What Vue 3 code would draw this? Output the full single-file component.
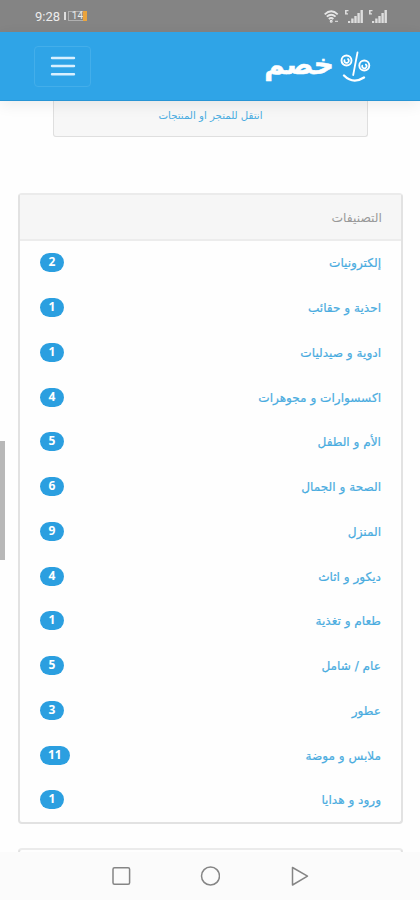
<script setup>
import { ref } from "vue";

const categories = ref([
  { name: "إلكترونيات", count: 2 },
  { name: "احذية و حقائب", count: 1 },
  { name: "ادوية و صيدليات", count: 1 },
  { name: "اكسسوارات و مجوهرات", count: 4 },
  { name: "الأم و الطفل", count: 5 },
  { name: "الصحة و الجمال", count: 6 },
  { name: "المنزل", count: 9 },
  { name: "ديكور و اثاث", count: 4 },
  { name: "طعام و تغذية", count: 1 },
  { name: "عام / شامل", count: 5 },
  { name: "عطور", count: 3 },
  { name: "ملابس و موضة", count: 11 },
  { name: "ورود و هدايا", count: 1 },
]);
</script>

<template>
  <div class="screen" dir="rtl">
    <div class="status" dir="ltr">
      <span class="time">9:28</span>
      <span class="battery"><span class="level">14</span><i></i></span>
      <div class="signals">
        <svg width="15" height="13" viewBox="0 0 15 13" fill="none" stroke="#e6e6e6" stroke-width="1.8">
          <path d="M.7 4.3Q7.2-1.7 13.7 4.3M2.8 6.7Q7.2 2.7 11.6 6.7M4.8 9Q7.2 7 9.4 9" />
          <circle cx="7.2" cy="11.3" r=".6" />
          <path d="M11 11.3h3" stroke-width="1" />
        </svg>
        <svg v-for="n in 2" :key="n" width="18" height="13" viewBox="0 0 18 13" fill="#dedede">
          <path d="M0 0h3.5v1.2H1.6v2H3v1.3H0zM3 11h2.2v2H3zM6.200 8.500h2.400V13H6.200zM9.300 6h2.400v7H9.300zM12.400 3h2.400v10h-2.400zM15.500 0h2.400v13h-2.400z" />
        </svg>
      </div>
    </div>

    <header class="navbar">
      <a class="brand">
        <svg width="32" height="33" viewBox="0 0 32 33" fill="none" stroke="#fff" stroke-linecap="round">
          <circle cx="7.500" cy="10.500" r="5" stroke-width="1.900" />
          <circle cx="25.300" cy="15.500" r="5" stroke-width="1.900" />
          <path d="M18.500 2.500 14.200 25" stroke-width="1.800" />
          <path d="M5 25.500Q14 34.500 25 27.500" stroke-width="2.300" />
          <path d="M5.500 10a2.200 2.200 0 1 0 3.500-1M23.300 15.500a2.200 2.200 0 1 0 3.500-1" stroke-width="1.700" />
        </svg>
        <span>خصم</span>
      </a>
      <button class="toggler">
        <svg width="26" height="22" viewBox="0 0 26 22" stroke="#d9f0ff" stroke-width="2.400" stroke-linecap="round">
          <path d="M2 3h22M2 11h22M2 19.300h22" />
        </svg>
      </button>
    </header>

    <main>
      <div class="store">
        <a>انتقل للمتجر او المنتجات</a>
      </div>

      <div class="card">
        <div class="card-header">التصنيفات</div>
        <ul>
          <li v-for="item in categories" :key="item.name">
            <a>{{ item.name }}</a>
            <span class="badge">{{ item.count }}</span>
          </li>
        </ul>
      </div>
      <div class="card next"></div>
      <div class="scrollbar"></div>
    </main>

    <footer class="keys" dir="ltr">
      <svg width="20" height="20" viewBox="0 0 20 20"><rect x="2" y="1.700" width="16.600" height="16.600" rx="1.500" /></svg>
      <svg width="20" height="20" viewBox="0 0 20 20"><circle cx="10.500" cy="10" r="9" /></svg>
      <svg width="20" height="20" viewBox="0 0 20 20"><path d="M3.500 1.500v17.500L18.500 10.200z" /></svg>
    </footer>
  </div>
</template>

<style>
body {
  margin: 0;
  background: #fefefe;
}
</style>

<style scoped>
* {
  box-sizing: border-box;
}
.screen {
  width: 420px;
  height: 900px;
  display: flex;
  flex-direction: column;
  overflow: hidden;
  font-family: "DejaVu Sans", sans-serif;
  background: #fefefe;
}
.status {
  flex: 0 0 32px;
  display: flex;
  align-items: center;
  padding: 0 33px 0 35px;
  background: #848484;
  color: #ececec;
  font-family: Roboto, sans-serif;
  font-size: 13px;
}
.battery {
  display: flex;
  align-items: center;
  justify-content: flex-end;
  width: 23px;
  height: 8px;
  margin-left: 4px;
  border-left: 2px solid #ddd;
}
.level {
  border: 1px solid #b0b0b0;
  border-right: 0;
  padding-left: 3px;
  font-size: 10px;
  line-height: 8px;
}
.battery i {
  width: 4px;
  height: 10px;
  background: #eba43c;
}
.signals {
  display: flex;
  gap: 6px;
  margin-left: auto;
}
.navbar {
  position: relative;
  z-index: 1;
  flex: 0 0 69px;
  display: flex;
  align-items: center;
  justify-content: space-between;
  padding: 0 49px 0 34px;
  background: #2fa4e7;
  border-bottom: 1px solid #2895d5;
  box-shadow: 0 4px 14px rgba(0, 0, 0, 0.07);
}
.brand {
  display: flex;
  align-items: center;
  gap: 5px;
  font-size: 28px;
  font-weight: bold;
  line-height: 40px;
}
.toggler {
  display: flex;
  align-items: center;
  justify-content: center;
  width: 57px;
  height: 41px;
  padding: 0;
  border: 1px solid #43aeea;
  border-radius: 4px;
  background: none;
}
main {
  position: relative;
  flex: 1;
  overflow: hidden;
}
.store {
  height: 36px;
  margin: 0 52px 0 53px;
  text-align: center;
  background: #f7f7f7;
  border: 1px solid #dfdfdf;
  border-top: 0;
  border-radius: 0 0 3px 3px;
  font-size: 10.200px;
  line-height: 30px;
}
a {
  color: #4aace0;
}
.brand,
.brand span {
  color: #fff;
}
.brand span {
  padding-bottom: 2px;
  -webkit-text-stroke: 0.5px #fff;
}
.card {
  height: 631px;
  margin: 56px 17px 0 18px;
  border: 2px solid #e2e2e2;
  border-top-color: #ebebeb;
  border-radius: 4px;
  background: #fefefe;
}
.card-header {
  height: 46px;
  padding: 0 19px;
  line-height: 46px;
  font-size: 12.300px;
  color: #999;
  background: #f6f6f6;
  border-bottom: 2px solid #ececec;
}
ul {
  margin: 0;
  padding: 0;
  list-style: none;
}
li {
  display: flex;
  align-items: center;
  justify-content: space-between;
  height: 44.750px;
  padding: 0 20px;
  font-size: 12.100px;
}
li a {
  -webkit-text-stroke: 0.2px #4aace0;
}
.badge {
  min-width: 24px;
  height: 19px;
  margin-bottom: 1px;
  padding: 0 8px;
  border-radius: 10px;
  background: #2b9fe0;
  color: #fff;
  font-family: "Open Sans", sans-serif;
  font-size: 12px;
  font-weight: bold;
  line-height: 18px;
  text-align: center;
}
.next {
  height: 80px;
  margin-top: 24px;
}
.scrollbar {
  position: absolute;
  left: 0;
  top: 340px;
  width: 5px;
  height: 119px;
  background: #b8b8b8;
}
.keys {
  flex: 0 0 48px;
  display: flex;
  align-items: center;
  gap: 69px;
  padding-left: 111px;
  background: #fbfbfb;
}
.keys svg {
  fill: none;
  stroke: #858585;
  stroke-width: 1.500;
  stroke-linejoin: round;
}
</style>
